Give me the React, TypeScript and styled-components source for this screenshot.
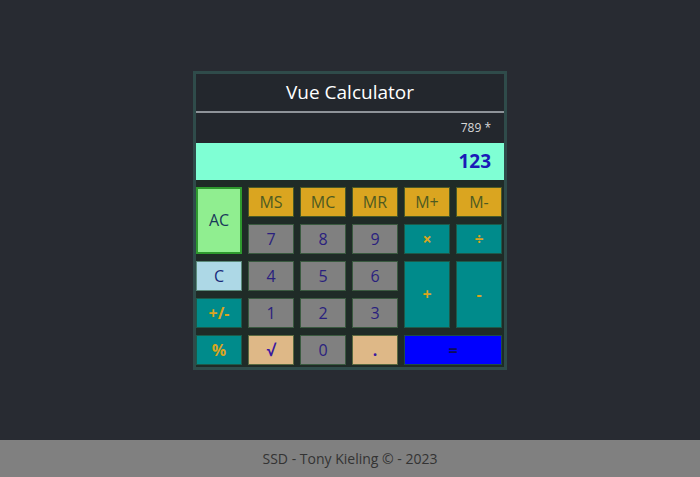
import React from "react";
import styled, { createGlobalStyle } from "styled-components";

const Global = createGlobalStyle`
  html, body { margin: 0; padding: 0; }
  body {
    background: #282b32;
    font-family: "Open Sans", "Noto Sans", sans-serif;
  }
`;

const Page = styled.div`
  display: flex;
  flex-direction: column;
  height: 477px;
`;

const Main = styled.main`
  flex: 1;
  display: flex;
  align-items: center;
  justify-content: center;
`;

const Calc = styled.div`
  width: 308px;
  border: 3px solid #2f4b4a;
  background: #23272d;
  display: flex;
  flex-direction: column;
`;

const Title = styled.div`
  height: 37px;
  display: flex;
  align-items: center;
  justify-content: center;
  color: #ffffff;
  font-size: 19px;
  border-bottom: 2px solid #8e9399;
`;

const Expr = styled.div`
  height: 30px;
  display: flex;
  align-items: center;
  justify-content: flex-end;
  padding-right: 13px;
  color: #d8d8d8;
  font-size: 12px;
`;

const Display = styled.div`
  height: 37px;
  background: #7fffd4;
  display: flex;
  align-items: center;
  justify-content: flex-end;
  padding-right: 13px;
  color: #1a1ab8;
  font-size: 19px;
  font-weight: 700;
`;

const Grid = styled.div`
  display: grid;
  grid-template-columns: repeat(6, 46px);
  grid-template-rows: repeat(5, 30px);
  column-gap: 6px;
  row-gap: 7px;
  padding: 7px 1px 2px 0;
  background: #1f2b27;
`;

type Kind = "ac" | "c" | "mem" | "num" | "op" | "sq" | "eq";

const palette: Record<Kind, { bg: string; fg: string; border: string; weight: number }> = {
  ac: { bg: "#90ee90", fg: "#18385a", border: "#2e9a2e", weight: 400 },
  c: { bg: "#add8e6", fg: "#1a2a7a", border: "#5a8a7a", weight: 400 },
  mem: { bg: "#daa520", fg: "#4e5a20", border: "#4a5a26", weight: 400 },
  num: { bg: "#808080", fg: "#2a1f7e", border: "#3a5a40", weight: 400 },
  op: { bg: "#008b8b", fg: "#daa520", border: "#1d5a4a", weight: 700 },
  sq: { bg: "#deb887", fg: "#3a18a0", border: "#5a6a40", weight: 700 },
  eq: { bg: "#0000ff", fg: "#0c0c5a", border: "#1d4a4a", weight: 700 },
};

const Key = styled.button<{ $kind: Kind; $col?: string; $row?: string }>`
  box-sizing: border-box;
  margin: 0;
  padding: 0;
  font-family: "Open Sans", "Noto Sans", sans-serif;
  font-size: 16px;
  display: flex;
  align-items: center;
  justify-content: center;
  background: ${(p) => palette[p.$kind].bg};
  color: ${(p) => palette[p.$kind].fg};
  font-weight: ${(p) => palette[p.$kind].weight};
  border: ${(p) => (p.$kind === "ac" ? "2px" : "1px")} solid ${(p) => palette[p.$kind].border};
  grid-column: ${(p) => p.$col ?? "auto"};
  grid-row: ${(p) => p.$row ?? "auto"};
`;

const Footer = styled.footer`
  height: 37px;
  background: #808080;
  display: flex;
  align-items: center;
  justify-content: center;
  color: #333333;
  font-size: 14px;
`;

export default function App() {
  return (
    <Page>
      <Global />
      <Main>
        <Calc>
          <Title>Vue Calculator</Title>
          <Expr>789 *</Expr>
          <Display>123</Display>
          <Grid>
            <Key $kind="ac" $col="1" $row="1 / span 2">AC</Key>
            <Key $kind="mem" $col="2" $row="1">MS</Key>
            <Key $kind="mem" $col="3" $row="1">MC</Key>
            <Key $kind="mem" $col="4" $row="1">MR</Key>
            <Key $kind="mem" $col="5" $row="1">M+</Key>
            <Key $kind="mem" $col="6" $row="1">M-</Key>

            <Key $kind="num" $col="2" $row="2">7</Key>
            <Key $kind="num" $col="3" $row="2">8</Key>
            <Key $kind="num" $col="4" $row="2">9</Key>
            <Key $kind="op" $col="5" $row="2">×</Key>
            <Key $kind="op" $col="6" $row="2">÷</Key>

            <Key $kind="c" $col="1" $row="3">C</Key>
            <Key $kind="num" $col="2" $row="3">4</Key>
            <Key $kind="num" $col="3" $row="3">5</Key>
            <Key $kind="num" $col="4" $row="3">6</Key>
            <Key $kind="op" $col="5" $row="3 / span 2">+</Key>
            <Key $kind="op" $col="6" $row="3 / span 2">-</Key>

            <Key $kind="op" $col="1" $row="4">+/-</Key>
            <Key $kind="num" $col="2" $row="4">1</Key>
            <Key $kind="num" $col="3" $row="4">2</Key>
            <Key $kind="num" $col="4" $row="4">3</Key>

            <Key $kind="op" $col="1" $row="5">%</Key>
            <Key $kind="sq" $col="2" $row="5">√</Key>
            <Key $kind="num" $col="3" $row="5">0</Key>
            <Key $kind="sq" $col="4" $row="5">.</Key>
            <Key $kind="eq" $col="5 / span 2" $row="5">=</Key>
          </Grid>
        </Calc>
      </Main>
      <Footer>SSD - Tony Kieling © - 2023</Footer>
    </Page>
  );
}
